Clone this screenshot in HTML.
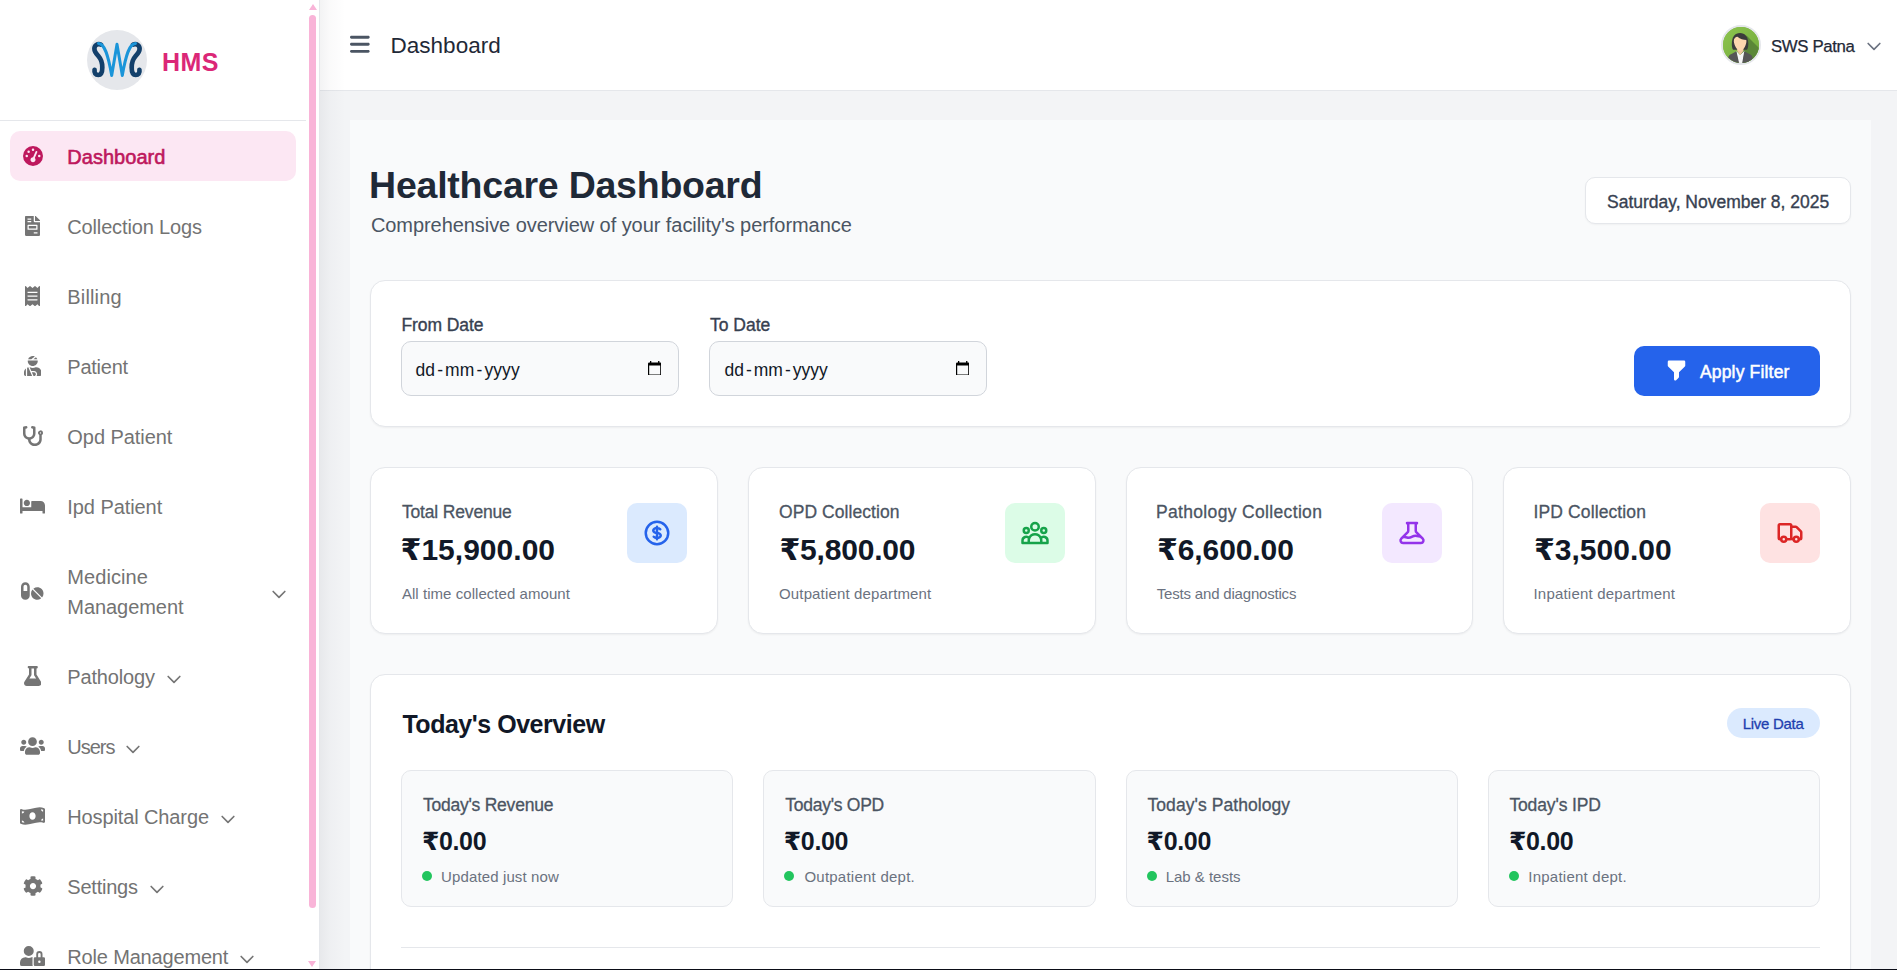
<!DOCTYPE html>
<html lang="en">
<head>
<meta charset="utf-8">
<title>Dashboard - HMS</title>
<style>
*{box-sizing:border-box;margin:0;padding:0}
html,body{width:1897px;height:970px;overflow:hidden}
body{background:#f3f4f6;font-family:"Liberation Sans","DejaVu Sans",sans-serif;color:#1f2937;position:relative}
svg{display:block}
/* ---------- sidebar ---------- */
.sidebar{position:absolute;left:0;top:0;width:320px;height:969px;background:#fff;border-right:1px solid #e5e7eb;overflow:hidden}
.brand{position:absolute;left:0;top:0;width:306px;height:121px;border-bottom:1px solid #e5e7eb}
.brand .logo{position:absolute;left:87px;top:30px;width:60px;height:60px;border-radius:50%;background:#e5e7eb;overflow:hidden}
.brand .name{position:absolute;left:163px;top:46px;font-size:25px;line-height:30px;font-weight:700;color:#db2777}
.nav{position:absolute;left:0;top:121px;width:306px;list-style:none}
.nav li{position:absolute;left:10px;width:286px;height:50px;border-radius:10px;color:#737373;font-size:20px;line-height:30px}
.nav li .ic{position:absolute;left:0;top:0;width:45px;height:100%;display:flex;align-items:center;justify-content:center;fill:#757575}
.nav li .tx{position:absolute;left:57.3px;top:0;height:100%;display:flex;align-items:center;white-space:nowrap}
.nav li.active{background:#fce7f3;color:#be185d;font-weight:400;-webkit-text-stroke:.6px #be185d}
.nav li.active .ic{fill:#be185d}
.nav li .chev{margin-left:9px;margin-top:5.4px;stroke:#757575;fill:none;stroke-width:2;stroke-linecap:round;stroke-linejoin:round;flex:none}
.scroll{position:absolute;left:306px;top:0;width:13px;height:969px;background:#fff}
.scroll .thumb{position:absolute;left:3px;top:15px;width:7px;height:892.7px;border-radius:4px;background:#f9b4d8}
.scroll .up{position:absolute;left:2.5px;top:4px;width:0;height:0;border-left:4.5px solid transparent;border-right:4.5px solid transparent;border-bottom:6px solid #f9b4d8}
.scroll .dn{position:absolute;left:2.3px;top:961px;width:0;height:0;border-left:4.5px solid transparent;border-right:4.5px solid transparent;border-top:6px solid #f9b4d8}
/* ---------- topbar ---------- */
.topbar{position:absolute;left:320px;top:0;width:1577px;height:91px;background:#fff;border-bottom:1px solid #e5e7eb}
.topbar .burger{position:absolute;left:30.2px;top:33px;fill:#4b5563}
.topbar h2{position:absolute;left:70px;top:30px;font-size:22.5px;line-height:30px;font-weight:400;color:#1f2937}
.topbar .user{position:absolute;left:1401px;top:25px;height:40px;display:flex;align-items:center}
.topbar .avatar{width:40px;height:40px;flex:none;border-radius:50%;border:2px solid #e5e7eb;overflow:hidden;background:#7cb342}
.topbar .uname{margin-left:10px;white-space:nowrap;font-size:16.8px;color:#1f2937;-webkit-text-stroke:.25px #1f2937}
.topbar .uchev{position:absolute;left:143px;top:11.3px;stroke:#6b7280;fill:none;stroke-width:2;stroke-linecap:round;stroke-linejoin:round}
.shade{position:absolute;left:320px;top:0;width:26px;height:969px;background:linear-gradient(to right,rgba(17,24,39,.05),rgba(17,24,39,.02) 40%,rgba(17,24,39,0));pointer-events:none}
/* ---------- main ---------- */
.main{position:absolute;left:350px;top:120px;width:1521px;height:849px;background:#f9fafb;overflow:hidden}
.main h1{position:absolute;left:20px;top:41px;font-size:37.5px;line-height:46px;font-weight:700;color:#1f2937;white-space:nowrap}
.main .sub{position:absolute;left:20px;top:93px;font-size:20px;line-height:30px;color:#4b5563;white-space:nowrap}
.datebadge{position:absolute;left:1235px;top:57px;width:266px;height:47px;background:#fff;border:1px solid #e5e7eb;border-radius:10px;font-size:17.5px;font-weight:400;-webkit-text-stroke:.35px #374151;color:#374151;display:flex;align-items:center;justify-content:center;white-space:nowrap;box-shadow:0 1px 2px rgba(0,0,0,.04)}
.card{position:absolute;background:#fff;border:1px solid #e5e7eb;border-radius:15px;box-shadow:0 1px 2px rgba(0,0,0,.05)}
.filter{left:20px;top:160px;width:1481px;height:147px}
.filter label{position:absolute;top:33px;font-size:17.5px;line-height:25px;font-weight:400;-webkit-text-stroke:.35px #374151;color:#374151;white-space:nowrap}
.filter .inp{position:absolute;top:60px;width:278px;height:55px;border:1px solid #d1d5db;border-radius:10px;background:#f9fafb;font-size:17.5px;color:#111827;display:flex;align-items:center;padding-left:14px}
.filter .inp i{font-style:normal;margin:0 2px}
.filter .inp svg{position:absolute;left:245.9px;top:18.5px}
.btn{position:absolute;left:1263px;top:65px;width:186px;height:50px;background:#2563eb;border-radius:10px;color:#fff;font-size:17.5px;font-weight:400;-webkit-text-stroke:.5px #fff;display:flex;align-items:center;justify-content:flex-start;padding-left:65px;white-space:nowrap}
.btn svg{fill:#fff;position:absolute;left:30px;top:11.8px}
.stat{top:347px;width:348px;height:167px}
.stat .lb{position:absolute;left:30px;top:31px;font-size:17.5px;line-height:25px;color:#4b5563;font-weight:400;-webkit-text-stroke:.3px #4b5563;white-space:nowrap}
.stat .val{position:absolute;left:30px;top:62px;font-size:30px;line-height:40px;font-weight:700;color:#111827;white-space:nowrap}
.stat .ds{position:absolute;left:30px;top:115px;font-size:15px;line-height:20px;color:#6b7280;white-space:nowrap}
.stat .ib{position:absolute;left:256px;top:35px;width:60px;height:60px;border-radius:10px;display:flex;align-items:center;justify-content:center}
.stat .ib svg{fill:none;stroke-width:2;stroke-linecap:round;stroke-linejoin:round}
.today{left:20px;top:554px;width:1481px;height:400px;border-bottom-left-radius:0;border-bottom-right-radius:0}
.today h3{position:absolute;left:30px;top:32px;font-size:25px;line-height:35px;font-weight:700;color:#111827;white-space:nowrap}
.pill{position:absolute;left:1356px;top:33px;width:93px;height:30px;border-radius:15px;background:#dbeafe;color:#1e40af;font-size:15px;font-weight:400;display:flex;align-items:center;justify-content:center;white-space:nowrap;-webkit-text-stroke:.3px #1e40af}
.tcard{position:absolute;top:95px;width:332px;height:137px;background:#f9fafb;border:1px solid #e5e7eb;border-radius:10px}
.tcard .lb{position:absolute;left:20px;top:22px;font-size:17.5px;line-height:25px;color:#4b5563;-webkit-text-stroke:.3px #4b5563;white-space:nowrap}
.tcard .val{position:absolute;left:20px;top:52px;font-size:25px;line-height:35px;font-weight:700;color:#111827;white-space:nowrap}
.tcard .ds{position:absolute;left:20px;top:95px;font-size:15px;line-height:20px;color:#6b7280;white-space:nowrap;padding-left:20px}
.tcard::after{content:"";position:absolute;left:20px;top:100px;width:10px;height:10px;border-radius:50%;background:#22c55e}
.today hr{position:absolute;left:30px;top:272px;width:1419px;height:1px;border:0;background:#e5e7eb}
.bottomline{position:absolute;left:0;top:969px;width:1897px;height:1px;background:#0b0d17}
#t-hms{letter-spacing:0.54px;margin-left:-1.1px;margin-top:0.9px}
#n-coll{letter-spacing:-0.15px;margin-left:0.0px;margin-top:0.7px}
#n-bill{letter-spacing:0.15px;margin-left:0.0px;margin-top:0.7px}
#n-pat{letter-spacing:-0.24px;margin-left:0.0px;margin-top:0.7px}
#n-opd{letter-spacing:-0.05px;margin-left:0.0px;margin-top:0.8px}
#n-ipd{letter-spacing:-0.07px;margin-left:0.0px;margin-top:0.8px}
#n-med1{letter-spacing:0.07px;margin-left:0.0px;margin-top:0.9px}
#n-med2{letter-spacing:-0.06px;margin-left:0.0px;margin-top:-0.1px}
#t-title{letter-spacing:0.04px;margin-left:0.4px;margin-top:1.4px}
#t-h1{letter-spacing:-0.24px;margin-left:-0.9px;margin-top:1.1px}
#t-sub{letter-spacing:-0.06px;margin-left:0.9px;margin-top:-2.8px}
#t-date{letter-spacing:-0.01px;margin-left:0.2px;margin-top:3.6px}
#t-from{letter-spacing:-0.08px;margin-left:0.5px;margin-top:-1.2px}
#t-to{letter-spacing:-0.03px;margin-left:1.1px;margin-top:-1.2px}
#t-apply{letter-spacing:0.18px;margin-left:0.9px;margin-top:3.4px}
#s1-lb{letter-spacing:-0.16px;margin-left:0.9px;margin-top:0.8px}
#s1-val{letter-spacing:0.02px;margin-left:-0.5px;margin-top:-0.5px}
#s1-ds{letter-spacing:0.05px;margin-left:0.9px;margin-top:1.2px}
#s2-lb{letter-spacing:0.06px;margin-left:0.0px;margin-top:0.8px}
#s2-val{letter-spacing:-0.19px;margin-left:0.4px;margin-top:-0.5px}
#s2-ds{letter-spacing:0.15px;margin-left:0.0px;margin-top:1.2px}
#s3-lb{letter-spacing:0.34px;margin-left:-1.1px;margin-top:0.8px}
#s3-val{letter-spacing:-0.10px;margin-left:0.0px;margin-top:-0.5px}
#s3-ds{letter-spacing:-0.19px;margin-left:-0.2px;margin-top:1.2px}
#s4-lb{letter-spacing:0.12px;margin-left:-0.5px;margin-top:0.8px}
#s4-val{letter-spacing:-0.01px;margin-left:0.0px;margin-top:-0.5px}
#s4-ds{letter-spacing:0.20px;margin-left:-0.5px;margin-top:1.2px}
#t-today{letter-spacing:-0.47px;margin-left:1.4px;margin-top:0.4px}
#t-live{letter-spacing:-0.28px;margin-left:-0.9px;margin-top:1.3px}
#s5-lb{letter-spacing:-0.23px;margin-left:0.9px;margin-top:0.2px}
#s5-val{letter-spacing:-0.38px;margin-left:0.0px;margin-top:0.5px}
#s5-ds{letter-spacing:0.12px;margin-left:-0.9px;margin-top:1.2px}
#s6-lb{letter-spacing:-0.27px;margin-left:1.3px;margin-top:0.2px}
#s6-val{letter-spacing:-0.34px;margin-left:-0.2px;margin-top:0.5px}
#s6-ds{letter-spacing:0.24px;margin-left:0.4px;margin-top:1.2px}
#s7-lb{letter-spacing:0.07px;margin-left:0.5px;margin-top:0.2px}
#s7-val{letter-spacing:-0.34px;margin-left:-0.4px;margin-top:0.5px}
#s7-ds{letter-spacing:-0.02px;margin-left:-1.3px;margin-top:1.2px}
#s8-lb{letter-spacing:-0.13px;margin-left:0.4px;margin-top:0.2px}
#s8-val{letter-spacing:-0.34px;margin-left:0.0px;margin-top:0.5px}
#s8-ds{letter-spacing:0.23px;margin-left:-0.7px;margin-top:1.2px}
#n-path{letter-spacing:-0.15px;margin-left:0.0px;margin-top:1.6px}
#n-users{letter-spacing:-1.03px;margin-left:0.0px;margin-top:1.6px}
#n-hosp{letter-spacing:-0.12px;margin-left:0.0px;margin-top:1.6px}
#n-sett{letter-spacing:-0.23px;margin-left:0.0px;margin-top:1.6px}
#n-role{letter-spacing:-0.17px;margin-left:0.0px;margin-top:1.6px}
#t-user{letter-spacing:-0.34px;margin-left:9.9px;margin-top:4.6px}
#t-d1{letter-spacing:0.10px;margin-left:-0.5px;margin-top:4.4px}
#t-d2{letter-spacing:-0.00px;margin-left:0.5px;margin-top:4.4px}
#n-dash{letter-spacing:0.03px;margin-left:0.0px;margin-top:0.9px}
</style>
</head>
<body>
<aside class="sidebar">
  <div class="brand">
    <div class="logo">
      <svg width="60" height="60" viewBox="0 0 60 60">
        <g fill="none" stroke-linecap="round" stroke-linejoin="round">
        <path d="M14 14.600C10.500 13.200 7.400 15.300 7.400 18.800C7.400 22.200 9.500 24.200 11.800 26.600C14.200 29.200 15.300 32.500 15.300 37.500C15.300 42.200 14 45 11.300 45C8.600 45 7 42.800 7.600 39.800" stroke="#13406b" stroke-width="4.700"/>
        <path d="M46 14.600C49.500 13.200 52.600 15.300 52.600 18.800C52.600 22.200 50.500 24.200 48.200 26.600C45.800 29.200 44.700 32.500 44.700 37.500C44.700 42.200 46 45 48.700 45C51.400 45 53 42.800 52.400 39.800" stroke="#13406b" stroke-width="4.700"/>
        <path d="M11.500 13.400C17.500 13.600 21 24 24.700 45.400L30 14.300L35.300 45.400C39 24 42.500 13.600 48.500 13.400" stroke="#1b95d9" stroke-width="3"/>
        </g>
      </svg>
    </div>
    <div class="name" id="t-hms">HMS</div>
  </div>
  <ul class="nav">
    <li class="active" style="top:10px"><span class="ic"><svg width="20.0" height="20.0" viewBox="0 0 512 512"><path d="M0 256a256 256 0 1 1 512 0A256 256 0 1 1 0 256zM288 96a32 32 0 1 0-64 0 32 32 0 1 0 64 0zM256 416c35.300 0 64-28.700 64-64c0-17.400-6.900-33.100-18.100-44.600L366 161.700c5.300-12.100-.200-26.300-12.300-31.600s-26.300.200-31.600 12.300L257.900 288c-.600 0-1.300 0-1.900 0c-35.300 0-64 28.700-64 64s28.700 64 64 64zM176 144a32 32 0 1 0-64 0 32 32 0 1 0 64 0zM96 288a32 32 0 1 0 0-64 32 32 0 1 0 0 64zm352-32a32 32 0 1 0-64 0 32 32 0 1 0 64 0z"/></svg></span><span class="tx" id="n-dash">Dashboard</span></li>
    <li style="top:80px"><span class="ic"><svg width="15.0" height="20.0" viewBox="0 0 384 512"><path d="M288 256H96v64h192v-64zm89-151L279.100 7c-4.500-4.500-10.600-7-17-7H256v128h128v-6.100c0-6.300-2.500-12.400-7-16.900zm-153 31V0H24C10.700 0 0 10.700 0 24v464c0 13.300 10.700 24 24 24h336c13.300 0 24-10.700 24-24V160H248c-13.200 0-24-10.800-24-24zM64 72c0-4.420 3.580-8 8-8h80c4.420 0 8 3.580 8 8v16c0 4.420-3.580 8-8 8H72c-4.420 0-8-3.580-8-8V72zm0 64c0-4.420 3.580-8 8-8h80c4.420 0 8 3.580 8 8v16c0 4.420-3.580 8-8 8H72c-4.420 0-8-3.580-8-8v-16zm256 304c0 4.420-3.580 8-8 8h-80c-4.420 0-8-3.580-8-8v-16c0-4.420 3.580-8 8-8h80c4.420 0 8 3.580 8 8v16zm0-200v96c0 8.840-7.160 16-16 16H80c-8.840 0-16-7.160-16-16v-96c0-8.840 7.160-16 16-16h224c8.840 0 16 7.160 16 16z"/></svg></span><span class="tx" id="n-coll">Collection Logs</span></li>
    <li style="top:150px"><span class="ic"><svg width="15.0" height="20.0" viewBox="0 0 384 512"><path d="M358.400 3.200L320 48 265.600 3.200a15.900 15.900 0 0 0-19.200 0L192 48 137.600 3.200a15.900 15.900 0 0 0-19.200 0L64 48 25.600 3.200C15-4.700 0 2.800 0 16v480c0 13.200 15 20.700 25.600 12.800L64 464l54.400 44.800a15.900 15.900 0 0 0 19.200 0L192 464l54.400 44.800a15.900 15.900 0 0 0 19.200 0L320 464l38.400 44.800c10.500 7.900 25.600.400 25.600-12.800V16c0-13.200-15-20.700-25.600-12.800zM320 360c0 4.400-3.600 8-8 8H72c-4.400 0-8-3.600-8-8v-16c0-4.400 3.600-8 8-8h240c4.400 0 8 3.600 8 8v16zm0-96c0 4.400-3.600 8-8 8H72c-4.400 0-8-3.600-8-8v-16c0-4.400 3.600-8 8-8h240c4.400 0 8 3.600 8 8v16zm0-96c0 4.400-3.600 8-8 8H72c-4.400 0-8-3.600-8-8v-16c0-4.400 3.600-8 8-8h240c4.400 0 8 3.600 8 8v16z"/></svg></span><span class="tx" id="n-bill">Billing</span></li>
    <li style="top:220px"><span class="ic"><svg width="17.5" height="20.0" viewBox="0 0 448 512"><path d="M277.37 11.98C261.08 4.47 243.11 0 224 0c-53.69 0-99.5 33.13-118.51 80h81.19l90.69-68.02zM342.51 80c-7.9-19.47-20.67-36.2-36.49-49.520L239.990 80h102.520zM224 256c70.690 0 128-57.310 128-128 0-5.480-.950-10.700-1.610-16H97.610c-.670 5.300-1.610 10.520-1.610 16 0 70.690 57.310 128 128 128zM80 299.700V512h128.260l-98.450-221.520A132.835 132.835 0 0 0 80 299.700zM0 464c0 26.510 21.490 48 48 48V320.240C18.880 344.890 0 381.260 0 422.400V464zm256-48h-55.380l42.670 96H256c26.470 0 48-21.530 48-48s-21.530-48-48-48zm57.600-128h-16.710c-22.240 10.180-46.880 16-72.890 16s-50.650-5.820-72.890-16h-7.370l42.670 96H256c44.110 0 80 35.890 80 80 0 18.080-6.260 34.590-16.410 48H400c26.510 0 48-21.490 48-48v-41.600c0-74.230-60.170-134.400-134.400-134.400z"/></svg></span><span class="tx" id="n-pat">Patient</span></li>
    <li style="top:290px"><span class="ic"><svg width="20.0" height="20.0" viewBox="0 0 512 512"><path d="M447.100 112c-34.200.500-62.300 28.400-63 62.600-.500 24.300 12.500 45.600 32 56.800V344c0 57.300-50.200 104-112 104-60 0-109.200-44.100-111.900-99.200C265 333.800 320 269.200 320 192V36.600c0-11.400-8.100-21.300-19.300-23.500L237.800.500c-13-2.600-25.600 5.800-28.200 18.800L206.400 35c-2.600 13 5.800 25.600 18.800 28.200l30.700 6.100v121.400c0 52.900-42.200 96.700-95.100 97.200-53.400.500-96.900-42.700-96.900-96V69.400l30.700-6.100c13-2.600 21.400-15.200 18.800-28.200l-3.100-15.700C107.700 6.400 95.100-2 82.100.600L19.300 13C8.100 15.300 0 25.100 0 36.600V192c0 77.300 55.100 142 128.100 156.800C130.700 439.200 208.600 512 304 512c97 0 176-75.400 176-168V231.400c19.100-11.100 32-31.700 32-55.400 0-35.700-29.200-64.500-64.900-64zm.900 80c-8.800 0-16-7.200-16-16s7.200-16 16-16 16 7.200 16 16-7.200 16-16 16z"/></svg></span><span class="tx" id="n-opd">Opd Patient</span></li>
    <li style="top:360px"><span class="ic"><svg width="25.0" height="20.0" viewBox="0 0 640 512"><path d="M176 256c44.110 0 80-35.890 80-80s-35.890-80-80-80-80 35.890-80 80 35.890 80 80 80zm352-128H304c-8.840 0-16 7.160-16 16v144H64V80c0-8.840-7.160-16-16-16H16C7.160 64 0 71.160 0 80v352c0 8.840 7.160 16 16 16h32c8.840 0 16-7.160 16-16v-48h512v48c0 8.840 7.160 16 16 16h32c8.840 0 16-7.160 16-16V240c0-61.860-50.140-112-112-112z"/></svg></span><span class="tx" id="n-ipd">Ipd Patient</span></li>
    <li style="top:430px;height:80px"><span class="ic"><svg width="22.5" height="20.0" viewBox="0 0 576 512"><path d="M112 32C50.100 32 0 82.100 0 144v224c0 61.900 50.100 112 112 112s112-50.100 112-112V144c0-61.900-50.100-112-112-112zm48 224H64V144c0-26.500 21.500-48 48-48s48 21.500 48 48v112zm139.700-29.700c-3.500-3.500-9.400-3.100-12.300.800-45.300 62.500-40.400 150.100 15.900 206.400 56.300 56.300 143.900 61.200 206.400 15.900 4-2.900 4.300-8.800.800-12.300L299.700 226.300zm229.800-19c-56.300-56.300-143.900-61.200-206.400-15.900-4 2.900-4.300 8.800-.800 12.300l210.800 210.800c3.500 3.500 9.400 3.100 12.300-.800 45.300-62.600 40.500-150.100-15.900-206.400z"/></svg></span><span class="tx" style="line-height:30px;display:block;top:10px;height:60px"><span id="n-med1" style="display:inline-block">Medicine</span><br><span id="n-med2" style="display:inline-block">Management</span></span><svg class="chev" style="position:absolute;left:259.1px;top:33px;margin:0" width="20" height="20" viewBox="0 0 24 24"><path d="M19 9l-7 7-7-7"/></svg></li>
    <li style="top:530px"><span class="ic"><svg width="17.5" height="20.0" viewBox="0 0 448 512"><path d="M437.200 403.500L320 215V64h8c13.300 0 24-10.700 24-24V24c0-13.300-10.700-24-24-24H120c-13.300 0-24 10.700-24 24v16c0 13.300 10.700 24 24 24h8v151L10.800 403.500C-18.500 450.600 15.300 512 70.900 512h306.200c55.700 0 89.400-61.500 60.100-108.500zM137.900 320l48.200-77.600c3.700-5.200 5.800-11.600 5.800-18.400V64h64v160c0 6.900 2.200 13.200 5.800 18.400l48.200 77.600h-172z"/></svg></span><span class="tx"><span id="n-path">Pathology</span><svg class="chev" width="20" height="20" viewBox="0 0 24 24"><path d="M19 9l-7 7-7-7"/></svg></span></li>
    <li style="top:600px"><span class="ic"><svg width="25.0" height="20.0" viewBox="0 0 640 512"><path d="M96 224c35.300 0 64-28.700 64-64s-28.700-64-64-64-64 28.700-64 64 28.700 64 64 64zm448 0c35.300 0 64-28.700 64-64s-28.700-64-64-64-64 28.700-64 64 28.700 64 64 64zm32 32h-64c-17.600 0-33.500 7.100-45.100 18.600 40.300 22.100 68.900 62 75.100 109.400h66c17.700 0 32-14.300 32-32v-32c0-35.300-28.700-64-64-64zm-256 0c61.900 0 112-50.100 112-112S381.900 32 320 32 208 82.100 208 144s50.100 112 112 112zm76.800 32h-8.300c-20.800 10-43.900 16-68.500 16s-47.600-6-68.500-16h-8.300C179.600 288 128 339.600 128 403.200V432c0 26.500 21.500 48 48 48h288c26.500 0 48-21.500 48-48v-28.800c0-63.600-51.600-115.200-115.200-115.200zm-223.700-13.400C161.500 263.100 145.600 256 128 256H64c-35.300 0-64 28.700-64 64v32c0 17.700 14.300 32 32 32h65.900c6.300-47.400 34.900-87.300 75.200-109.400z"/></svg></span><span class="tx"><span id="n-users">Users</span><svg class="chev" width="20" height="20" viewBox="0 0 24 24"><path d="M19 9l-7 7-7-7"/></svg></span></li>
    <li style="top:670px"><span class="ic"><svg width="25.0" height="20.0" viewBox="0 0 640 512"><path d="M621.160 54.460C582.370 38.190 543.550 32 504.750 32c-123.170-.010-246.330 62.340-369.500 62.340-30.890 0-61.760-3.920-92.650-13.720-3.470-1.100-6.950-1.620-10.350-1.620C15.040 79 0 92.320 0 110.810v317.260c0 12.630 7.230 24.600 18.840 29.460C57.630 473.810 96.450 480 135.250 480c123.170 0 246.340-62.350 369.510-62.350 30.890 0 61.760 3.920 92.650 13.720 3.470 1.100 6.950 1.620 10.350 1.620 17.210 0 32.250-13.320 32.250-31.810V83.930c-.010-12.640-7.240-24.600-18.850-29.470zM48 132.220c20.120 5.040 41.120 7.570 62.720 8.930C104.840 170.540 79 192.690 48 192.690v-60.470zm0 285v-47.780c34.370 0 62.180 27.270 63.710 61.400-22.530-1.810-43.590-6.310-63.710-13.620zM320 352c-44.190 0-80-42.990-80-96 0-53.020 35.820-96 80-96s80 42.980 80 96c0 53.030-35.830 96-80 96zm272 27.780c-17.520-4.390-35.710-6.850-54.320-8.440 5.870-26.080 27.500-45.880 54.320-49.280v57.720zm0-236.110c-30.890-3.910-54.860-29.700-55.810-61.550 19.540 2.170 38.090 6.230 55.810 12.670v48.880z"/></svg></span><span class="tx"><span id="n-hosp">Hospital Charge</span><svg class="chev" width="20" height="20" viewBox="0 0 24 24"><path d="M19 9l-7 7-7-7"/></svg></span></li>
    <li style="top:740px"><span class="ic"><svg width="20.0" height="20.0" viewBox="0 0 512 512"><path d="M487.400 315.700l-42.600-24.600c4.300-23.200 4.300-47 0-70.200l42.600-24.600c4.900-2.800 7.100-8.600 5.500-14-11.100-35.600-30-67.800-54.700-94.600-3.800-4.100-10-5.100-14.800-2.300L380.800 110c-17.900-15.400-38.500-27.300-60.800-35.100V25.800c0-5.600-3.900-10.500-9.400-11.700-36.700-8.200-74.300-7.800-109.200 0-5.500 1.200-9.400 6.100-9.400 11.700V75c-22.200 7.900-42.800 19.800-60.800 35.100L88.700 85.500c-4.900-2.800-11-1.900-14.800 2.300-24.700 26.700-43.600 58.900-54.700 94.600-1.700 5.400.600 11.200 5.500 14L67.300 221c-4.300 23.200-4.300 47 0 70.200l-42.600 24.600c-4.900 2.800-7.100 8.600-5.500 14 11.100 35.600 30 67.800 54.700 94.600 3.800 4.100 10 5.100 14.800 2.300l42.600-24.600c17.900 15.400 38.500 27.300 60.800 35.100v49.200c0 5.600 3.900 10.500 9.400 11.700 36.700 8.200 74.300 7.800 109.200 0 5.500-1.200 9.400-6.100 9.400-11.700v-49.200c22.200-7.900 42.800-19.800 60.800-35.100l42.600 24.600c4.900 2.800 11 1.900 14.800-2.300 24.700-26.700 43.600-58.900 54.700-94.600 1.500-5.500-.700-11.300-5.600-14.100zM256 336c-44.100 0-80-35.900-80-80s35.900-80 80-80 80 35.900 80 80-35.900 80-80 80z"/></svg></span><span class="tx"><span id="n-sett">Settings</span><svg class="chev" width="20" height="20" viewBox="0 0 24 24"><path d="M19 9l-7 7-7-7"/></svg></span></li>
    <li style="top:810px"><span class="ic"><svg width="25.0" height="20.0" viewBox="0 0 640 512"><path d="M224 256A128 128 0 1 0 96 128a128 128 0 0 0 128 128zm96 64a63.080 63.080 0 0 1 8.100-30.500c-4.800-.500-9.500-1.500-14.500-1.500h-16.700a174.080 174.080 0 0 1-145.800 0h-16.700A134.430 134.430 0 0 0 0 422.400V464a48 48 0 0 0 48 48h280.900a63.540 63.540 0 0 1-8.900-32zm288-32h-32v-80a80 80 0 0 0-160 0v80h-32a32 32 0 0 0-32 32v160a32 32 0 0 0 32 32h224a32 32 0 0 0 32-32V320a32 32 0 0 0-32-32zM496 432a32 32 0 1 1 32-32 32 32 0 0 1-32 32zm32-144h-64v-80a32 32 0 0 1 64 0z"/></svg></span><span class="tx"><span id="n-role">Role Management</span><svg class="chev" width="20" height="20" viewBox="0 0 24 24"><path d="M19 9l-7 7-7-7"/></svg></span></li>
  </ul>
  <div class="scroll"><div class="up"></div><div class="thumb"></div><div class="dn"></div></div>
</aside>

<header class="topbar">
  <span class="burger"><svg width="19.69" height="22.5" viewBox="0 0 448 512"><path d="M0 96C0 78.300 14.300 64 32 64H416c17.700 0 32 14.300 32 32s-14.300 32-32 32H32C14.300 128 0 113.700 0 96zM0 256c0-17.700 14.300-32 32-32H416c17.700 0 32 14.300 32 32s-14.300 32-32 32H32c-17.700 0-32-14.300-32-32zM448 416c0 17.700-14.300 32-32 32H32c-17.700 0-32-14.300-32-32s14.300-32 32-32H416c17.700 0 32 14.300 32 32z"/></svg></span>
  <h2 id="t-title">Dashboard</h2>
  <div class="user">
    <div class="avatar">
      <svg width="36" height="36" viewBox="0 0 36 36">
        <defs><linearGradient id="avg" x1="0" y1="0" x2="1" y2="1"><stop offset="0" stop-color="#8dc44e"/><stop offset="1" stop-color="#72aa3c"/></linearGradient></defs>
        <rect width="36" height="36" fill="url(#avg)"/>
        <path d="M23.500 8.500L38 23v15H18V24z" fill="#5b8738"/>
        <path d="M13 23.700L17.100 28L21.700 23.700L19.700 36H15.500z" fill="#f7f7f7"/>
        <path d="M4.600 36L5.300 30.500C5.600 28.600 6.800 27.600 8.500 27L13.400 24.300L16.100 36z" fill="#565656"/>
        <path d="M30.200 36L29.500 30.500C29.200 28.600 28 27.600 26.300 27L21.300 24.300L19.200 36z" fill="#565656"/>
        <path d="M8.800 17C8.800 9.500 12 5.900 17 5.900C22 5.900 25.300 9.500 25.300 17C25.300 19.500 24.800 21.500 24 22.700H10C9.200 21.500 8.800 19.500 8.800 17z" fill="#3b3b3b"/>
        <path d="M14.200 19h6.200v5L17.100 27.900L14.200 24z" fill="#f3c79e"/>
        <path d="M10.800 14.300C10.800 11.500 12.500 9.800 14.500 9.800C17 12 20.500 13 23.300 13C23.500 14 23.400 14.800 23.300 15.500C22.800 19 20.200 23.800 17.100 23.800C14 23.800 11.200 18.500 10.800 14.300z" fill="#fdd6ae"/>
      </svg>
    </div>
    <span class="uname" id="t-user">SWS Patna</span>
    <svg class="uchev" width="20" height="20" viewBox="0 0 24 24"><path d="M19 9l-7 7-7-7"/></svg>
  </div>
</header>
<div class="shade"></div>

<main class="main">
  <h1 id="t-h1">Healthcare Dashboard</h1>
  <p class="sub" id="t-sub">Comprehensive overview of your facility's performance</p>
  <div class="datebadge"><span id="t-date">Saturday, November 8, 2025</span></div>

  <section class="card filter">
    <label id="t-from" style="left:30px">From Date</label>
    <div class="inp" style="left:30px"><span id="t-d1">dd<i>-</i>mm<i>-</i>yyyy</span><svg width="13.4" height="14.7" viewBox="0 0 13.4 14.7"><path d="M2 0h1.300v1.500h6.800v-1.500h1.300v1.500h.8a1.200 1.200 0 0 1 1.200 1.200v10.800a1.200 1.200 0 0 1-1.200 1.200h-11a1.200 1.200 0 0 1-1.200-1.200v-10.800a1.200 1.200 0 0 1 1.200-1.200h.8zm-.8 4.400v9.100h11v-9.100z" fill="#000" fill-rule="evenodd"/></svg></div>
    <label id="t-to" style="left:338px">To Date</label>
    <div class="inp" style="left:338px"><span id="t-d2">dd<i>-</i>mm<i>-</i>yyyy</span><svg width="13.4" height="14.7" viewBox="0 0 13.4 14.7"><path d="M2 0h1.300v1.500h6.800v-1.500h1.300v1.500h.8a1.200 1.200 0 0 1 1.200 1.200v10.800a1.200 1.200 0 0 1-1.200 1.200h-11a1.200 1.200 0 0 1-1.200-1.200v-10.800a1.200 1.200 0 0 1 1.200-1.200h.8zm-.8 4.400v9.100h11v-9.100z" fill="#000" fill-rule="evenodd"/></svg></div>
    <div class="btn"><svg width="25" height="25" viewBox="0 0 20 20"><path fill-rule="evenodd" clip-rule="evenodd" d="M3 3a1 1 0 011-1h12a1 1 0 011 1v3a1 1 0 01-.293.707L12 11.414V15a1 1 0 01-.293.707l-2 2A1 1 0 018 17v-5.586L3.293 6.707A1 1 0 013 6V3z"/></svg><span id="t-apply">Apply Filter</span></div>
  </section>

  <section class="card stat" style="left:20px">
    <div class="lb" id="s1-lb">Total Revenue</div><div class="val" id="s1-val">₹15,900.00</div><div class="ds" id="s1-ds">All time collected amount</div>
    <div class="ib" style="background:#dbeafe"><svg width="30" height="30" viewBox="0 0 24 24" stroke="#2563eb"><path d="M12 8c-1.657 0-3 .895-3 2s1.343 2 3 2 3 .895 3 2-1.343 2-3 2m0-8c1.110 0 2.080.402 2.599 1M12 8V7m0 1v8m0 0v1m0-1c-1.110 0-2.080-.402-2.599-1M21 12a9 9 0 11-18 0 9 9 0 0118 0z"/></svg></div>
  </section>
  <section class="card stat" style="left:398px">
    <div class="lb" id="s2-lb">OPD Collection</div><div class="val" id="s2-val">₹5,800.00</div><div class="ds" id="s2-ds">Outpatient department</div>
    <div class="ib" style="background:#dcfce7"><svg width="30" height="30" viewBox="0 0 24 24" stroke="#16a34a"><path d="M17 20h5v-2a3 3 0 00-5.356-1.857M17 20H7m10 0v-2c0-.656-.126-1.283-.356-1.857M7 20H2v-2a3 3 0 015.356-1.857M7 20v-2c0-.656.126-1.283.356-1.857m0 0a5.002 5.002 0 019.288 0M15 7a3 3 0 11-6 0 3 3 0 016 0zm6 3a2 2 0 11-4 0 2 2 0 014 0zM7 10a2 2 0 11-4 0 2 2 0 014 0z"/></svg></div>
  </section>
  <section class="card stat" style="left:776px;width:347px">
    <div class="lb" id="s3-lb">Pathology Collection</div><div class="val" id="s3-val">₹6,600.00</div><div class="ds" id="s3-ds">Tests and diagnostics</div>
    <div class="ib" style="background:#f3e8ff;left:255px"><svg width="30" height="30" viewBox="0 0 24 24" stroke="#9333ea"><path d="M19.428 15.428a2 2 0 00-1.022-.547l-2.387-.477a6 6 0 00-3.860.517l-.318.158a6 6 0 01-3.860.517L6.050 15.210a2 2 0 00-1.806.547M8 4h8l-1 1v5.172a2 2 0 00.586 1.414l5 5c1.260 1.260.367 3.414-1.415 3.414H4.828c-1.782 0-2.674-2.154-1.414-3.414l5-5A2 2 0 009 10.172V5L8 4z"/></svg></div>
  </section>
  <section class="card stat" style="left:1153px">
    <div class="lb" id="s4-lb">IPD Collection</div><div class="val" id="s4-val">₹3,500.00</div><div class="ds" id="s4-ds">Inpatient department</div>
    <div class="ib" style="background:#fee2e2"><svg width="30" height="30" viewBox="0 0 24 24" stroke="#dc2626"><path d="M13 16V6a1 1 0 00-1-1H4a1 1 0 00-1 1v10a1 1 0 001 1h1m8-1a1 1 0 01-1 1H9m4-1V8a1 1 0 011-1h2.586a1 1 0 01.707.293l3.414 3.414a1 1 0 01.293.707V16a1 1 0 01-1 1h-1m-6-1a1 1 0 001 1h1M5 17a2 2 0 104 0m-4 0a2 2 0 114 0m6 0a2 2 0 104 0m-4 0a2 2 0 114 0"/></svg></div>
  </section>

  <section class="card today">
    <h3 id="t-today">Today's Overview</h3>
    <span class="pill"><span id="t-live">Live Data</span></span>
    <div class="tcard" style="left:30px"><div class="lb" id="s5-lb">Today's Revenue</div><div class="val" id="s5-val">₹0.00</div><div class="ds" id="s5-ds">Updated just now</div></div>
    <div class="tcard" style="left:392px;width:333px"><div class="lb" id="s6-lb">Today's OPD</div><div class="val" id="s6-val">₹0.00</div><div class="ds" id="s6-ds">Outpatient dept.</div></div>
    <div class="tcard" style="left:755px"><div class="lb" id="s7-lb">Today's Pathology</div><div class="val" id="s7-val">₹0.00</div><div class="ds" id="s7-ds">Lab &amp; tests</div></div>
    <div class="tcard" style="left:1117px"><div class="lb" id="s8-lb">Today's IPD</div><div class="val" id="s8-val">₹0.00</div><div class="ds" id="s8-ds">Inpatient dept.</div></div>
    <hr>
  </section>
</main>

<div class="bottomline"></div>
</body>
</html>
